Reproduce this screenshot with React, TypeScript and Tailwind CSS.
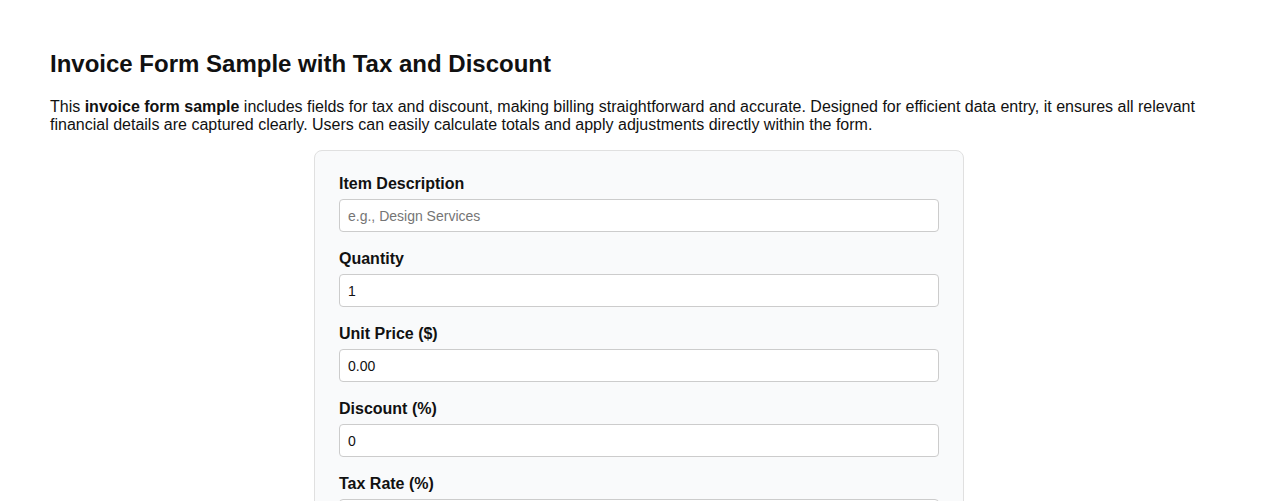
import { useState } from "react";

type Field = {
  id: string;
  label: string;
  placeholder?: string;
  defaultValue?: string;
  type: "text" | "number";
};

const FIELDS: Field[] = [
  { id: "description", label: "Item Description", placeholder: "e.g., Design Services", type: "text" },
  { id: "quantity", label: "Quantity", defaultValue: "1", type: "number" },
  { id: "price", label: "Unit Price ($)", defaultValue: "0.00", type: "number" },
  { id: "discount", label: "Discount (%)", defaultValue: "0", type: "number" },
  { id: "tax", label: "Tax Rate (%)", defaultValue: "0", type: "number" },
];

export default function App() {
  const [values, setValues] = useState<Record<string, string>>(
    Object.fromEntries(FIELDS.map((f) => [f.id, f.defaultValue ?? ""]))
  );

  const qty = parseFloat(values.quantity) || 0;
  const price = parseFloat(values.price) || 0;
  const subtotal = qty * price;
  const discounted = subtotal * (1 - (parseFloat(values.discount) || 0) / 100);
  const total = discounted * (1 + (parseFloat(values.tax) || 0) / 100);

  return (
    <div className="min-h-screen bg-white px-[50px] pt-[50px] pb-10 font-['Liberation_Sans',Arial,sans-serif] text-[#111]">
      <h1 className="text-[24px] leading-[28px] font-bold">
        Invoice Form Sample with Tax and Discount
      </h1>
      <p className="mt-[20px] text-[16px] leading-[18px]">
        This <strong className="font-bold">invoice form sample</strong> includes fields for tax and
        discount, making billing straightforward and accurate. Designed for efficient data entry, it
        ensures all relevant financial details are captured clearly. Users can easily calculate totals
        and apply adjustments directly within the form.
      </p>

      <form
        className="mx-auto mt-[16px] max-w-[650px] rounded-[8px] border border-[#e0e0e0] bg-[#f9fafb] px-[24px] pt-[24px] pb-[24px]"
        onSubmit={(e) => e.preventDefault()}
      >
        {FIELDS.map((f) => (
          <div key={f.id} className="mb-[18px]">
            <label htmlFor={f.id} className="mb-[6px] block text-[16px] leading-[18px] font-bold">
              {f.label}
            </label>
            <input
              id={f.id}
              type="text"
              inputMode={f.type === "number" ? "decimal" : "text"}
              placeholder={f.placeholder}
              value={values[f.id]}
              onChange={(e) => setValues((v) => ({ ...v, [f.id]: e.target.value }))}
              className="box-border block h-[33px] w-full rounded-[4px] border border-[#cccccc] bg-white px-[8px] text-[14px] text-[#111] placeholder:text-[#757575] outline-none"
            />
          </div>
        ))}
        <div className="mb-[17px] text-[16px] leading-[18px] font-bold">
          Total: ${total.toFixed(2)}
        </div>
        <button
          type="submit"
          className="rounded-[4px] bg-[#2563eb] px-[16px] py-[8px] text-[14px] font-bold text-white"
        >
          Calculate Total
        </button>
      </form>
    </div>
  );
}
